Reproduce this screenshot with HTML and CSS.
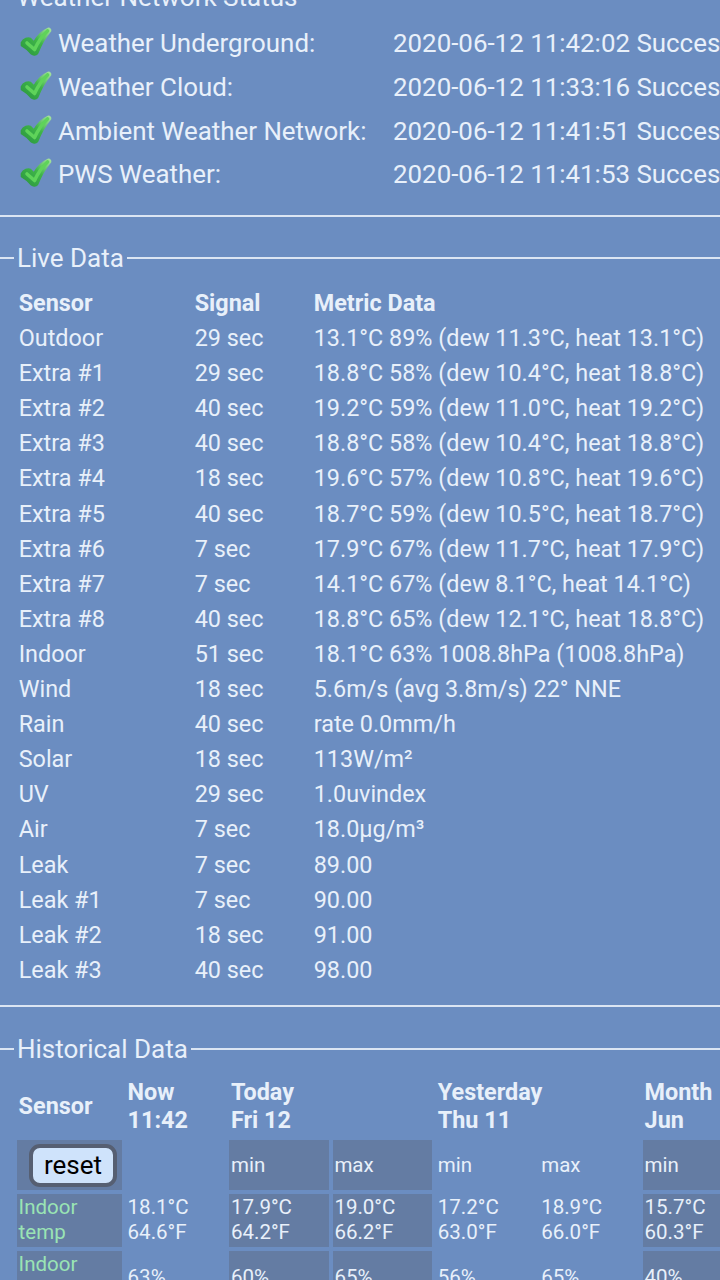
FILE: index.html
```html
<!DOCTYPE html>
<html lang="en">
<head>
    <meta charset="UTF-8">
    <meta name="viewport" content="width=device-width, initial-scale=1.0">
    <title>Weather Station Status</title>
    <link rel="stylesheet" href="styles.css">
</head>
<body>
    <svg class="defs" width="0" height="0">
        <defs>
            <linearGradient id="checkFill" x1="0" y1="1" x2="1" y2="0">
                <stop offset="0" stop-color="#2a9540"/>
                <stop offset="0.55" stop-color="#3fb548"/>
                <stop offset="1" stop-color="#a6e3a0"/>
            </linearGradient>
            <filter id="checkSoft" x="-10%" y="-10%" width="120%" height="120%">
                <feGaussianBlur stdDeviation="0.5"/>
            </filter>
            <symbol id="check" viewBox="-1 -1 32 29">
                <g filter="url(#checkSoft)">
                    <path d="M0.5 14.5C2.5 10.5 7 9.5 9.5 10.5L13 14C16 8.5 21.5 3 27 0.5C28.5 0 30 1.5 29.5 3C24 9.5 19.5 18 16.5 25.5C15 27.2 12 27.2 10.5 26C8 22.5 4 19.5 0.5 17.5Z" fill="url(#checkFill)" stroke="url(#checkFill)" stroke-width="1.6" stroke-linejoin="round"/>
                    <path d="M6 15L13.5 21.5C17 14 21 8 26.5 3" fill="none" stroke="#5ed35a" stroke-width="3.6" stroke-linecap="round" stroke-linejoin="round"/>
                </g>
            </symbol>
        </defs>
    </svg>

    <div class="page">
        <fieldset class="section">
            <legend>Weather Network Status</legend>
            <table class="status">
                <tr>
                    <td class="status-icon"><svg class="check"><use href="#check"/></svg></td>
                    <td class="status-name">Weather Underground:</td>
                    <td>2020-06-12 11:42:02 Success</td>
                </tr>
                <tr>
                    <td class="status-icon"><svg class="check"><use href="#check"/></svg></td>
                    <td class="status-name">Weather Cloud:</td>
                    <td>2020-06-12 11:33:16 Success</td>
                </tr>
                <tr>
                    <td class="status-icon"><svg class="check"><use href="#check"/></svg></td>
                    <td class="status-name">Ambient Weather Network:</td>
                    <td>2020-06-12 11:41:51 Success</td>
                </tr>
                <tr>
                    <td class="status-icon"><svg class="check"><use href="#check"/></svg></td>
                    <td class="status-name">PWS Weather:</td>
                    <td>2020-06-12 11:41:53 Success</td>
                </tr>
            </table>
        </fieldset>

        <hr>

        <fieldset class="section">
            <legend>Live Data</legend>
            <table class="live">
                <thead>
                    <tr><th>Sensor</th><th>Signal</th><th>Metric Data</th></tr>
                </thead>
                <tbody>
                    <tr><td>Outdoor</td><td>29 sec</td><td>13.1°C 89% (dew 11.3°C, heat 13.1°C)</td></tr>
                    <tr><td>Extra #1</td><td>29 sec</td><td>18.8°C 58% (dew 10.4°C, heat 18.8°C)</td></tr>
                    <tr><td>Extra #2</td><td>40 sec</td><td>19.2°C 59% (dew 11.0°C, heat 19.2°C)</td></tr>
                    <tr><td>Extra #3</td><td>40 sec</td><td>18.8°C 58% (dew 10.4°C, heat 18.8°C)</td></tr>
                    <tr><td>Extra #4</td><td>18 sec</td><td>19.6°C 57% (dew 10.8°C, heat 19.6°C)</td></tr>
                    <tr><td>Extra #5</td><td>40 sec</td><td>18.7°C 59% (dew 10.5°C, heat 18.7°C)</td></tr>
                    <tr><td>Extra #6</td><td>7 sec</td><td>17.9°C 67% (dew 11.7°C, heat 17.9°C)</td></tr>
                    <tr><td>Extra #7</td><td>7 sec</td><td>14.1°C 67% (dew 8.1°C, heat 14.1°C)</td></tr>
                    <tr><td>Extra #8</td><td>40 sec</td><td>18.8°C 65% (dew 12.1°C, heat 18.8°C)</td></tr>
                    <tr><td>Indoor</td><td>51 sec</td><td>18.1°C 63% 1008.8hPa (1008.8hPa)</td></tr>
                    <tr><td>Wind</td><td>18 sec</td><td>5.6m/s (avg 3.8m/s) 22° NNE</td></tr>
                    <tr><td>Rain</td><td>40 sec</td><td>rate 0.0mm/h</td></tr>
                    <tr><td>Solar</td><td>18 sec</td><td>113W/m²</td></tr>
                    <tr><td>UV</td><td>29 sec</td><td>1.0uvindex</td></tr>
                    <tr><td>Air</td><td>7 sec</td><td>18.0µg/m³</td></tr>
                    <tr><td>Leak</td><td>7 sec</td><td>89.00</td></tr>
                    <tr><td>Leak #1</td><td>7 sec</td><td>90.00</td></tr>
                    <tr><td>Leak #2</td><td>18 sec</td><td>91.00</td></tr>
                    <tr><td>Leak #3</td><td>40 sec</td><td>98.00</td></tr>
                </tbody>
            </table>
        </fieldset>

        <hr class="hr-wide">

        <fieldset class="section">
            <legend>Historical Data</legend>
            <table class="history">
                <colgroup>
                    <col class="col-sensor">
                    <col class="col-value">
                    <col class="col-value">
                    <col class="col-value">
                    <col class="col-value">
                    <col class="col-value">
                    <col class="col-value">
                </colgroup>
                <thead>
                    <tr>
                        <th>Sensor</th>
                        <th>Now<br>11:42</th>
                        <th colspan="2">Today<br>Fri 12</th>
                        <th colspan="2">Yesterday<br>Thu 11</th>
                        <th>Month<br>Jun</th>
                    </tr>
                </thead>
                <tbody>
                    <tr class="minmax">
                        <td class="shade"><button class="reset">reset</button></td>
                        <td></td>
                        <td class="shade">min</td>
                        <td class="shade">max</td>
                        <td>min</td>
                        <td>max</td>
                        <td class="shade">min</td>
                    </tr>
                    <tr>
                        <td class="shade label">Indoor temp</td>
                        <td>18.1°C<br>64.6°F</td>
                        <td class="shade">17.9°C<br>64.2°F</td>
                        <td class="shade">19.0°C<br>66.2°F</td>
                        <td>17.2°C<br>63.0°F</td>
                        <td>18.9°C<br>66.0°F</td>
                        <td class="shade">15.7°C<br>60.3°F</td>
                    </tr>
                    <tr>
                        <td class="shade label">Indoor humidity</td>
                        <td>63%</td>
                        <td class="shade">60%</td>
                        <td class="shade">65%</td>
                        <td>56%</td>
                        <td>65%</td>
                        <td class="shade">40%</td>
                    </tr>
                </tbody>
            </table>
        </fieldset>
    </div>
</body>
</html>
```

FILE: styles.css
```css
html, body {
    margin: 0;
    padding: 0;
    height: 1280px;
    overflow: hidden;
}

body {
    font-family: Roboto, Arial, sans-serif;
    font-size: 23.4px;
    line-height: 1.12;
    background-color: #6b8dc1;
    color: #e8f0fa;
}

.defs {
    display: block;
}

.page {
    width: 720px;
    margin-top: -17.3px;
}

hr {
    height: 2px;
    margin: 0 0 27px;
    border: none;
    background-color: #dbe5f3;
}

.hr-wide {
    margin-bottom: 28px;
}

.section {
    min-width: 0;
    margin: 0;
    padding: 0 0 0 17px;
    border: none;
    border-top: 2px solid #dbe5f3;
}

.section legend {
    margin-left: -3px;
    padding: 0 3px;
    font-size: 26px;
    white-space: nowrap;
}

table {
    border-collapse: separate;
    white-space: nowrap;
}

/* status list */
.status {
    margin-top: 10px;
    margin-bottom: 18.3px;
    width: 730px;
    table-layout: fixed;
    border-spacing: 0;
    font-size: 25.9px;
}

.status td {
    height: 43.7px;
    padding: 0;
}

.status-icon {
    width: 41px;
}

.status-name {
    width: 335px;
}

.check {
    display: block;
    width: 32px;
    height: 29px;
    margin: -4px 0 0 2.5px;
}

/* live data */
.live {
    margin-top: 12.6px;
    margin-bottom: 17.4px;
    margin-left: -0.3px;
    border-spacing: 0;
}

.live th, .live td {
    height: 35.1px;
    padding: 0 2px;
    text-align: left;
}

.live th:first-child, .live td:first-child {
    width: 172px;
}

.live th:nth-child(2), .live td:nth-child(2) {
    width: 115px;
}

/* historical data */
.history {
    margin-top: 8px;
    margin-left: -4px;
    width: 733.4px;
    table-layout: fixed;
    border-spacing: 4px;
}

.col-sensor {
    width: 105px;
}

.col-value {
    width: 99.4px;
}

.history th {
    padding: 2px 1.6px;
    text-align: left;
    line-height: 28px;
}

.history td {
    padding: 1.3px 1.6px;
    vertical-align: middle;
    font-size: 20.5px;
    line-height: 25px;
    white-space: normal;
}

.shade {
    background-color: #647ca3;
}

.label {
    color: #9ae4b4;
}

.minmax td {
    height: 47.6px;
}

.reset {
    display: block;
    box-sizing: border-box;
    width: 88px;
    height: 43px;
    margin: 0 0 0 10.4px;
    padding: 0;
    font-family: inherit;
    font-size: 26px;
    color: #000;
    background-color: #cfe3fb;
    border: 4px solid #565f72;
    border-radius: 11px;
}
```
